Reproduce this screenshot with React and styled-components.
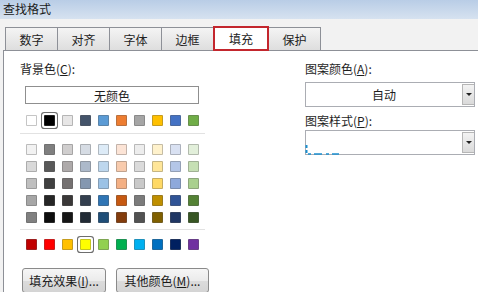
import React from 'react';
import styled, {createGlobalStyle} from 'styled-components';

const GlobalStyle = createGlobalStyle`
  html, body {
    margin: 0;
    padding: 0;
    background: #ffffff;
  }
  body {
    font-family: "Noto Sans CJK SC", "Liberation Sans", sans-serif;
    font-size: 12px;
    color: #1e1e1e;
  }
`;

const themeRow = ['#ffffff', '#000000', '#e7e6e6', '#44546a', '#5b9bd5', '#ed7d31', '#a5a5a5', '#ffc000', '#4472c4', '#70ad47'];

const tintRows = [
    ['#f2f2f2', '#7f7f7f', '#d0cece', '#d6dce4', '#ddebf7', '#fce4d6', '#ededed', '#fff2cc', '#d9e1f2', '#e2efda'],
    ['#d9d9d9', '#595959', '#aeaaaa', '#acb9ca', '#bdd7ee', '#f8cbad', '#dbdbdb', '#ffe699', '#b4c6e7', '#c6e0b4'],
    ['#bfbfbf', '#404040', '#757171', '#8497b0', '#9bc2e6', '#f4b084', '#c9c9c9', '#ffd966', '#8ea9db', '#a9d08e'],
    ['#a6a6a6', '#262626', '#3a3838', '#333f4f', '#2f75b5', '#c65911', '#7b7b7b', '#bf8f00', '#305496', '#548235'],
    ['#808080', '#0d0d0d', '#161616', '#222b35', '#1f4e78', '#833c0c', '#525252', '#806000', '#203764', '#375623'],
];

const standardRow = ['#c00000', '#ff0000', '#ffc000', '#ffff00', '#92d050', '#00b050', '#00b0f0', '#0070c0', '#002060', '#7030a0'];

const tabs = ['数字', '对齐', '字体', '边框', '填充', '保护'];

const Window = styled.div`
  width: 478px;
  height: 292px;
  overflow: hidden;
  background: #f2f2f2;
  display: flex;
  flex-direction: column;
`;

const TitleBar = styled.div`
  height: 19px;
  line-height: 18px;
  padding-left: 3px;
  font-size: 12px;
  color: #1a1a1a;
  background: linear-gradient(#b9cde6, #d6e2f0);
  flex-shrink: 0;
`;

const TabStrip = styled.div`
  display: flex;
  align-items: flex-end;
  height: 31px;
  padding-left: 5px;
  flex-shrink: 0;
`;

const Tab = styled.div`
  box-sizing: border-box;
  width: ${p => p.$active ? 56 : 53}px;
  height: ${p => p.$active ? 25 : 23}px;
  margin-right: ${p => p.$active ? 0 : 0}px;
  display: flex;
  align-items: center;
  justify-content: center;
  font-size: 12px;
  color: #222;
  border: ${p => p.$active ? '2px solid #c3262d' : '1px solid #8d9097'};
  border-bottom: ${p => p.$active ? '2px solid #c3262d' : 'none'};
  background: ${p => p.$active ? '#ffffff' : 'linear-gradient(#f4f4f4, #dedede)'};
  margin-bottom: ${p => p.$active ? -1 : 0}px;
  position: relative;
  z-index: ${p => p.$active ? 1 : 0};
  & + & {
    margin-left: -1px;
  }
`;

const Panel = styled.div`
  flex: 1;
  margin-left: 3px;
  background: #ffffff;
  border-top: 1px solid #8d9097;
  border-left: 1px solid #8d9097;
  display: flex;
  padding: 10px 0 0 16px;
`;

const LeftCol = styled.div`
  width: 190px;
  display: flex;
  flex-direction: column;
`;

const RightCol = styled.div`
  margin-left: 95px;
  width: 170px;
  display: flex;
  flex-direction: column;
`;

const Label = styled.div`
  line-height: 16px;
  height: 16px;
  font-size: 12px;
  margin-top: ${p => p.$top || 0}px;
  & u {
    text-decoration: underline;
    text-underline-offset: 1px;
  }
`;

const NoColorBox = styled.div`
  box-sizing: border-box;
  margin: 9px 0 0 5px;
  width: 174px;
  height: 18px;
  border: 1px solid #8f8f8f;
  display: flex;
  align-items: center;
  justify-content: center;
  font-size: 12px;
`;

const SwatchRow = styled.div`
  display: flex;
  gap: 7px;
  padding-left: 6px;
  margin-top: ${p => p.$top || 0}px;
`;

const Swatch = styled.div`
  box-sizing: border-box;
  width: 11px;
  height: 11px;
  border: 1px solid rgba(90, 90, 90, 0.35);
  background: ${p => p.$color};
  border-radius: 1px;
  box-shadow: ${p => p.$selected ? '0 0 0 2px #ffffff, 0 0 0 3px #6e6e6e' : 'none'};
`;

const Separator = styled.div`
  height: 1px;
  width: 185px;
  background: #e2e2e2;
  margin-top: ${p => p.$top || 0}px;
`;

const Grid = styled.div`
  display: flex;
  flex-direction: column;
  gap: 6px;
  margin-top: 10px;
`;

const ButtonRow = styled.div`
  display: flex;
  gap: 10px;
  margin: 18px 0 0 2px;
`;

const Button = styled.div`
  box-sizing: border-box;
  width: ${p => p.$width}px;
  height: 25px;
  border: 1px solid #8a8a8a;
  border-radius: 3px;
  background: linear-gradient(#f6f6f6 0%, #ebebeb 50%, #dcdcdc 51%, #d4d4d4 100%);
  display: flex;
  align-items: center;
  justify-content: center;
  font-size: 12px;
  color: #1a1a1a;
  & u {
    text-decoration: underline;
  }
`;

const Combo = styled.div`
  box-sizing: border-box;
  position: relative;
  width: 170px;
  height: 25px;
  border: 1px solid #abadb3;
  background: #ffffff;
  display: flex;
  margin-top: ${p => p.$top || 0}px;
`;

const ComboValue = styled.div`
  flex: 1;
  display: flex;
  align-items: center;
  justify-content: center;
  font-size: 12px;
`;

const DropButton = styled.div`
  box-sizing: border-box;
  width: 12px;
  margin: 1px 0;
  border: 1px solid #b6b6b6;
  border-right: none;
  background: linear-gradient(#f3f3f3, #dadada);
  display: flex;
  align-items: center;
  justify-content: center;
  &::after {
    content: '';
    width: 0;
    height: 0;
    border-left: 3px solid transparent;
    border-right: 3px solid transparent;
    border-top: 3px solid #222;
  }
`;

const PatternMark = styled.svg`
  position: absolute;
  left: -1px;
  bottom: -1px;
`;

const App = () => {
    return (
        <>
            <GlobalStyle/>
            <Window>
                <TitleBar>查找格式</TitleBar>
                <TabStrip>
                    {tabs.map(t => (
                        <Tab key={t} $active={t === '填充'}>{t}</Tab>
                    ))}
                </TabStrip>
                <Panel>
                    <LeftCol>
                        <Label>背景色(<u>C</u>):</Label>
                        <NoColorBox>无颜色</NoColorBox>
                        <SwatchRow $top={11}>
                            {themeRow.map((c, i) => (
                                <Swatch key={i} $color={c} $selected={i === 1}/>
                            ))}
                        </SwatchRow>
                        <Separator $top={7}/>
                        <Grid>
                            {tintRows.map((row, r) => (
                                <SwatchRow key={r}>
                                    {row.map((c, i) => <Swatch key={i} $color={c}/>)}
                                </SwatchRow>
                            ))}
                        </Grid>
                        <Separator $top={6}/>
                        <SwatchRow $top={9}>
                            {standardRow.map((c, i) => (
                                <Swatch key={i} $color={c} $selected={i === 3}/>
                            ))}
                        </SwatchRow>
                        <ButtonRow>
                            <Button $width={84}>填充效果(<u>I</u>)...</Button>
                            <Button $width={93}>其他颜色(<u>M</u>)...</Button>
                        </ButtonRow>
                    </LeftCol>
                    <RightCol>
                        <Label>图案颜色(<u>A</u>):</Label>
                        <Combo $top={5}>
                            <ComboValue>自动</ComboValue>
                            <DropButton/>
                        </Combo>
                        <Label $top={6}>图案样式(<u>P</u>):</Label>
                        <Combo $top={1}>
                            <ComboValue/>
                            <DropButton/>
                            <PatternMark width="34" height="10" viewBox="0 0 34 10">
                                <path d="M1.5 0 V9" stroke="#1b8fcf" strokeWidth="2" strokeDasharray="3 2"/>
                                <path d="M3 9 H34" stroke="#1b8fcf" strokeWidth="1.5" strokeDasharray="3 3 8 4"/>
                            </PatternMark>
                        </Combo>
                    </RightCol>
                </Panel>
            </Window>
        </>
    );
};

export default App;
